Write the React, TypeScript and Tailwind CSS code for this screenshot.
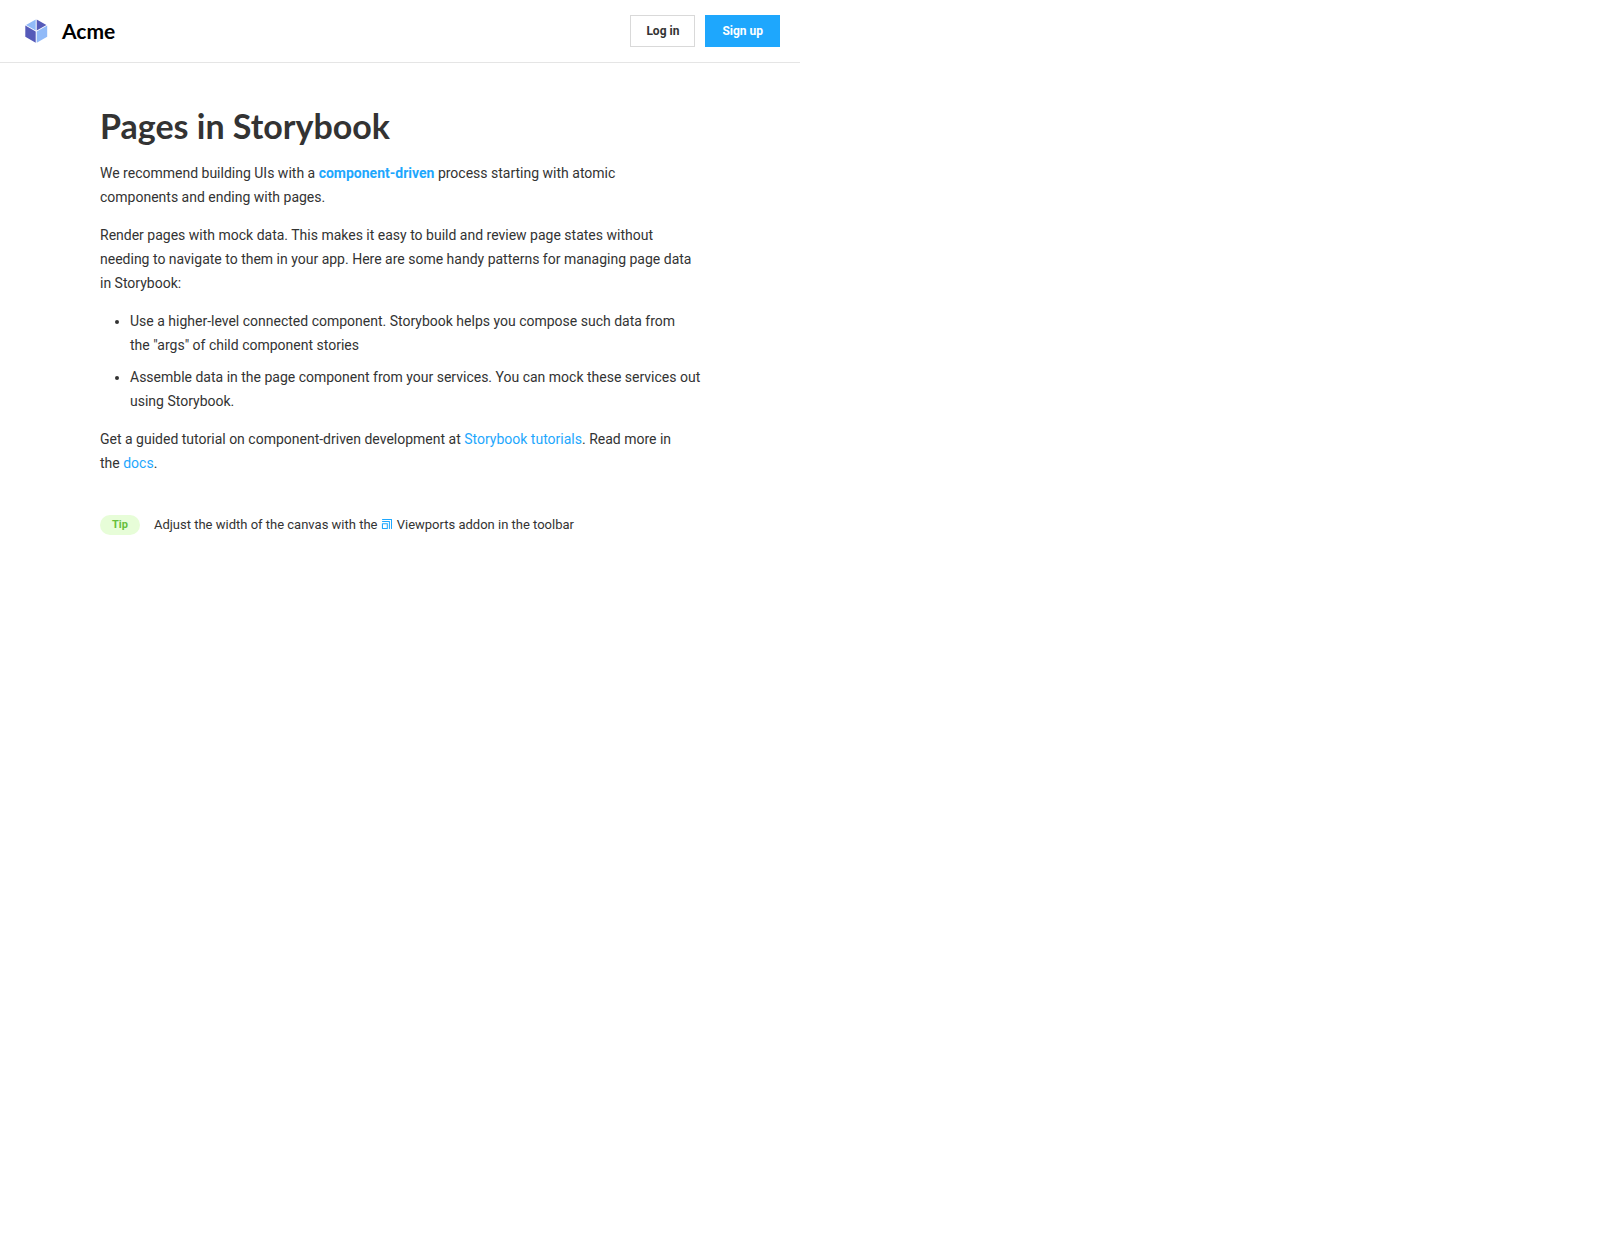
const linkClass = "text-[#1ea7fd]";

function Logo() {
  return (
    <svg width="32" height="32" viewBox="0 0 32 32" aria-hidden="true">
      <path d="M5.3 10.6l10.4 6v11.1l-10.4-6v-11zm11.4-6.2l9.7 5.5-9.7 5.6V4.4z" fill="#555AB9" />
      <path d="M27.2 10.6v11.2l-10.5 6V16.5l10.5-6zM15.7 4.4v11L6 9.9l9.7-5.5z" fill="#91BAF8" />
    </svg>
  );
}

function ViewportIcon() {
  return (
    <svg className="mt-[3px] mr-1 inline-block align-top" width="12" height="12" viewBox="0 0 12 12" aria-hidden="true">
      <path
        d="M1.5 5.2h4.8c.3 0 .5.2.5.4v5.1c-.1.2-.3.3-.4.3H1.4a.5.5 0 01-.5-.4V5.7c0-.3.2-.5.5-.5zm0-2.1h6.9c.3 0 .5.2.5.4v7a.5.5 0 01-1 0V4H1.5a.5.5 0 010-1zm0-2.1h9c.3 0 .5.2.5.4v9.1a.5.5 0 01-1 0V2H1.5a.5.5 0 010-1zm4.3 5.2H2V10h3.8V6.2z"
        fill="#1ea7fd"
      />
    </svg>
  );
}

function Header() {
  return (
    <header className="flex items-center justify-between border-b border-black/10 px-5 py-[15px]">
      <div className="flex items-center gap-[10px]">
        <Logo />
        <span className="font-['Lato',sans-serif] text-[21px] leading-5 font-bold text-black">Acme</span>
      </div>
      <div className="flex gap-[10px] text-[12px] leading-3 font-bold">
        <button type="button" className="h-8 border border-black/15 px-[15px] text-[#333333]">
          Log in
        </button>
        <button type="button" className="h-8 bg-[#1ea7fd] px-[17px] text-white">
          Sign up
        </button>
      </div>
    </header>
  );
}

export default function App() {
  return (
    <div className="w-1/2 bg-white font-['Roboto',sans-serif] text-[#333333]">
      <Header />
      <main className="mx-auto max-w-[640px] px-5 py-12 text-[14px] leading-6">
        <h1 className="mb-5 font-['Lato',sans-serif] text-[34px] leading-[30px] font-bold">Pages in Storybook</h1>
        <p className="mb-[14px]">
          We recommend building UIs with a{" "}
          <a href="#component-driven" className="font-bold text-[#1ea7fd]">component-driven</a>{" "}
          process starting with atomic
          <br />
          components and ending with pages.
        </p>
        <p className="mb-[14px]">
          Render pages with mock data. This makes it easy to build and review page states without
          needing to navigate to them in your app. Here are some handy patterns for managing page
          data in Storybook:
        </p>
        <ul className="-mr-3 mb-[14px] flex list-disc flex-col gap-2 pl-[30px]">
          <li>
            Use a higher-level connected component. Storybook helps you compose such data from
            <br />
            the "args" of child component stories
          </li>
          <li>
            Assemble data in the page component from your services. You can mock these services out
            using Storybook.
          </li>
        </ul>
        <p>
          Get a guided tutorial on component-driven development at{" "}
          <a href="#tutorials" className={linkClass}>Storybook tutorials</a>. Read more in
          <br />
          the <a href="#docs" className={linkClass}>docs</a>.
        </p>
        <div className="mt-10 flex items-center text-[13px] leading-5">
          <span className="mr-[14px] rounded-full bg-[#e7fdd8] px-3 text-[11px] font-bold text-[#66bf3c]">Tip</span>
          <p>
            Adjust the width of the canvas with the <ViewportIcon />
            Viewports addon in the toolbar
          </p>
        </div>
      </main>
    </div>
  );
}
